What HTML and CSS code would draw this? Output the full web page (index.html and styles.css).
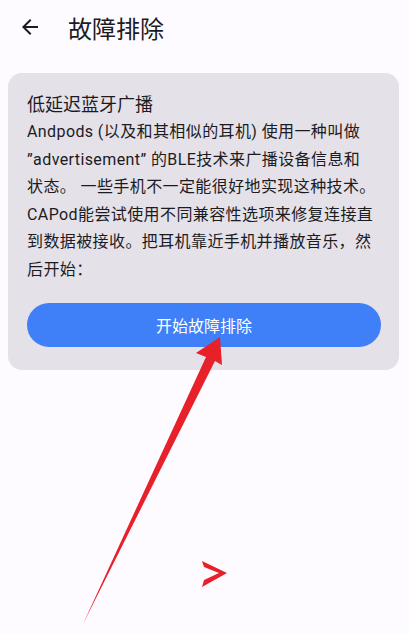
FILE: index.html
```html
<!DOCTYPE html>
<html lang="zh-CN">
<head>
  <meta charset="UTF-8" />
  <meta name="viewport" content="width=device-width, initial-scale=1.0"/>
  <title>故障排除</title>
  <link rel="stylesheet" href="styles.css">
</head>
<body>

  <header class="top-bar">
    <svg class="back-icon" viewBox="0 0 24 24" width="24" height="24">
      <path d="M20 11H7.83l5.59-5.59L12 4l-8 8 8 8 1.41-1.41L7.83 13H20v-2z" fill="#1c1b1f"/>
    </svg>
    <h1>故障排除</h1>
  </header>

  <section class="card">
    <h2>低延迟蓝牙广播</h2>
    <p>Andpods (以及和其相似的耳机) 使用一种叫做<br>
    ”advertisement” 的BLE技术来广播设备信息和<br>
    状态。 一些手机不一定能很好地实现这种技术。<br>
    CAPod能尝试使用不同兼容性选项来修复连接直<br>
    到数据被接收。把耳机靠近手机并播放音乐，然<br>
    后开始：</p>
    <button class="start-btn">开始故障排除</button>
  </section>

  <!-- red annotation arrows drawn over the screenshot -->
  <svg class="marks" viewBox="0 0 409 634" width="409" height="634">
    <polygon points="220,337 196,353 206,357 83,624 215,361 222,365" fill="#e8202a"/>
    <polygon points="202,561 227,573 202,587 204,580 219,573 204,567" fill="#e8202a"/>
  </svg>

</body>
</html>
```

FILE: styles.css
```css
body {
  margin: 0;
  background: #fdfbff;
  font-family: Roboto, "Noto Sans CJK SC", sans-serif;
  color: #1c1b1f;
  width: 409px;
  height: 634px;
  position: relative;
  overflow: hidden;
}

.top-bar {
  display: flex;
  align-items: center;
  height: 54px;
  padding-left: 18px;
}

.back-icon {
  display: block;
}

.top-bar h1 {
  margin: 0 0 0 26px;
  font-size: 24px;
  font-weight: 400;
}

.card {
  margin: 19px 10px 0 8px;
  padding: 19px 18px 23px 19px;
  background: #e5e1e8;
  border-radius: 14px;
}

.card h2 {
  margin: 0;
  font-size: 18px;
  font-weight: 400;
  line-height: 26px;
}

.card p {
  margin: 0;
  font-size: 16px;
  line-height: 27.6px;
  letter-spacing: 0.4px;
  white-space: nowrap;
}

.start-btn {
  display: block;
  width: 100%;
  height: 44px;
  margin-top: 19px;
  border: none;
  border-radius: 22px;
  background: #3f7ff7;
  color: #fff;
  font-family: inherit;
  font-size: 16px;
}

.marks {
  position: absolute;
  left: 0;
  top: 0;
  pointer-events: none;
}
```
